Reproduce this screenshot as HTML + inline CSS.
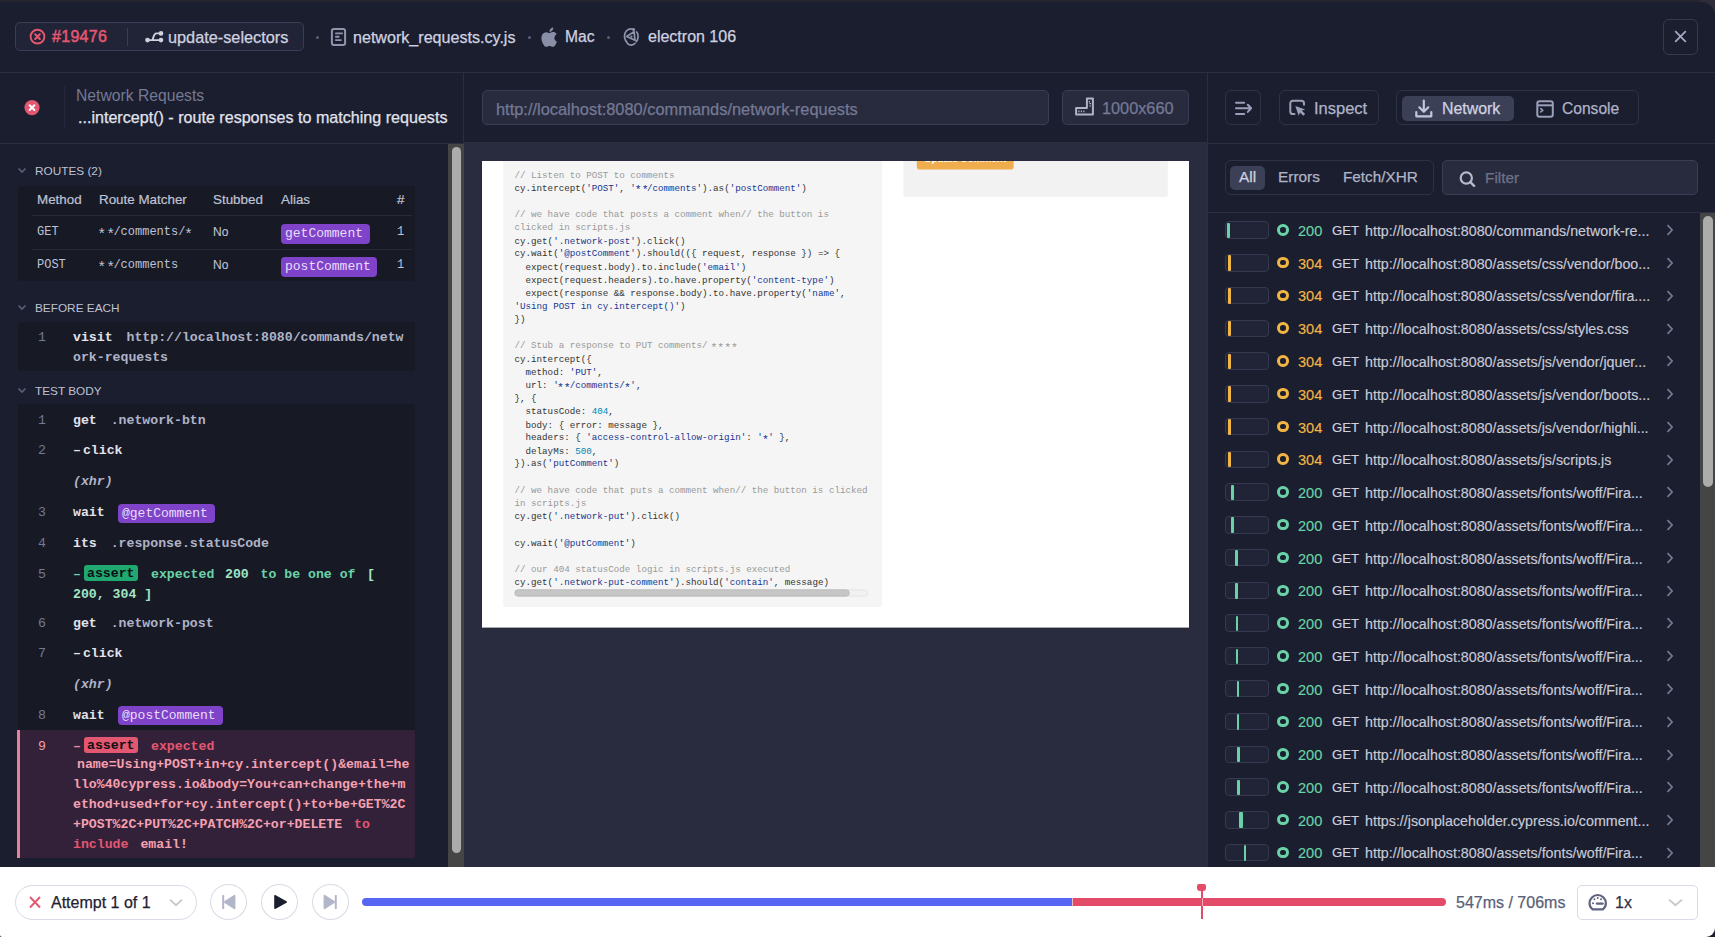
<!DOCTYPE html>
<html><head><meta charset="utf-8">
<style>
*{box-sizing:border-box;margin:0;padding:0}
html,body{width:1715px;height:937px;overflow:hidden;background:#1b1e2e;font-family:"Liberation Sans",sans-serif;color:#d0d2e0}
.abs{position:absolute}
.mono{font-family:"Liberation Mono",monospace}
svg{display:block}
/* header */
#hdr{left:0;top:0;width:1715px;height:73px;background:#1b1e2e;border-bottom:1px solid #2b2e42}
.pill{left:15px;top:22px;width:289px;height:29px;border:1px solid #3a3e55;background:#212437;border-radius:5px}
.htxt{font-size:16px;line-height:20px;white-space:nowrap;-webkit-text-stroke:0.25px currentColor}
.dot{width:3px;height:3px;border-radius:50%;background:#5a5f7a}
/* left */
#left{left:0;top:73px;width:464px;height:794px;background:#1b1e2e;border-right:1px solid #2b2e42}
#mid{left:464px;top:73px;width:743px;height:794px;background:#292c3f}
#right{left:1207px;top:73px;width:508px;height:794px;background:#1b1e2e;border-left:1px solid #2b2e42}
#bottom{left:0;top:867px;width:1715px;height:70px;background:#fff;border-radius:0 0 9px 2px}

.sec{font-size:11.8px;line-height:15px;color:#bfc2d4;white-space:nowrap}
.th{font-size:13.4px;line-height:16px;color:#bfc2d4;white-space:nowrap;-webkit-text-stroke:0.2px currentColor}
.td{font-size:12px;line-height:16px;color:#bfc2d4;white-space:nowrap;-webkit-text-stroke:0.1px currentColor}
.tdm{font-family:"Liberation Mono",monospace;font-size:12px;line-height:16px;color:#bfc2d4;white-space:nowrap}
.badge{font-family:"Liberation Mono",monospace;font-size:13px;line-height:20px;height:20px;background:#7f43c9;color:#e8defa;border-radius:4px;padding-left:4px;white-space:nowrap}
.b2{height:19px;line-height:19px}
.ln{left:38px;font-family:"Liberation Mono",monospace;font-size:13.2px;line-height:20px;color:#747994}
.cmd{left:73px;font-family:"Liberation Mono",monospace;font-size:13.2px;line-height:20px;color:#e1e3ed;white-space:pre}
.cmd b{font-weight:700;color:#e1e3ed}
.arg{color:#afb3c7;font-weight:700;margin-left:6px}
.xhr{font-style:italic;color:#afb3c7;font-weight:700}
.abadge{font-family:"Liberation Mono",monospace;font-size:13.2px;font-weight:700;line-height:17px;height:16px;width:54px;padding-left:3px;color:#0e0f15;border-radius:3px}
.grn{color:#69d3a7;font-weight:700}.grn b{color:#a3e6c6}
.red,.cmd .red{color:#e45770;font-weight:700}
.pink{color:#f5a0b0;font-weight:700}

.cl{position:absolute;left:0;font-family:"Liberation Mono",monospace;font-size:13px;line-height:18.58px;white-space:pre;color:#333}
.cl.c{color:#999}
.cl .s{color:#183691}
.cl .n{color:#0086b3}

.btn{border:1px solid #2e3247;border-radius:6px}
.wf{left:1225px;width:44px;height:17.5px;border:1px solid #363a50;background:#212436;border-radius:4px}
.ring{left:1277.3px;width:11.5px;height:11.5px;border:3.2px solid;border-radius:50%}
.nt{font-size:14.6px;line-height:18px;white-space:nowrap;-webkit-text-stroke:0.15px currentColor}
.st{left:1298px}
.gt{left:1332px;font-size:13.2px;color:#d0d2e0;letter-spacing:0}
.ur{left:1365px;font-size:14.25px;color:#c8cad8}
.circ{top:884px;width:37px;height:36px;border:1px solid #d8dae6;border-radius:50%}
.ast{font-style:normal;display:inline-block;transform:translateY(0.25em) scale(1.25)}
</style></head>
<body>
<div id="hdr" class="abs">
  <div class="abs" style="left:0;top:0;width:1715px;height:1.5px;background:#25252f"></div>
  <div class="abs" style="left:1699px;top:0;width:16px;height:16px;background:#2c2d38"><div style="width:16px;height:16px;background:#1b1e2e;border-top-right-radius:14px;margin-top:1.5px"></div></div>
  <div class="abs pill"></div>
  <svg class="abs" style="left:29px;top:28px" width="17" height="17" viewBox="0 0 17 17"><circle cx="8.5" cy="8.6" r="6.9" fill="none" stroke="#e45770" stroke-width="1.9"/><path d="M6.2 6.3l4.6 4.6M10.8 6.3l-4.6 4.6" stroke="#e45770" stroke-width="2.1" stroke-linecap="round"/></svg>
  <div class="abs htxt" style="left:52px;top:27px;color:#e45770;font-size:16px;letter-spacing:0.3px;-webkit-text-stroke:0.5px currentColor">#19476</div>
  <div class="abs" style="left:127px;top:28px;width:1px;height:18px;background:#3a3e55"></div>
  <svg class="abs" style="left:144px;top:30px" width="20" height="14" viewBox="0 0 20 14"><path d="M3.5 10.1H17M8.5 10.1C10 4 11 3.4 13 3.4H17" fill="none" stroke="#d0d2e0" stroke-width="1.9" stroke-linecap="round"/><circle cx="3.5" cy="10.1" r="2.3" fill="#d0d2e0"/><circle cx="17" cy="3.4" r="2.3" fill="#d0d2e0"/><circle cx="17" cy="10.1" r="2.3" fill="#d0d2e0"/></svg>
  <div class="abs htxt" style="left:168px;top:27px;font-size:16.3px">update-selectors</div>
  <div class="abs dot" style="left:315.5px;top:35.5px"></div>
  <svg class="abs" style="left:330px;top:27px" width="17" height="20" viewBox="0 0 17 20"><rect x="1.9" y="1.9" width="13.2" height="16" rx="2" fill="none" stroke="#9095ad" stroke-width="2"/><path d="M5.2 6.4h7.6M5.2 9.7h4.2M5.2 13.1h6.4" stroke="#9095ad" stroke-width="1.9"/></svg>
  <div class="abs htxt" style="left:353px;top:27px;font-size:16.1px">network_requests.cy.js</div>
  <div class="abs dot" style="left:527.5px;top:35.5px"></div>
  <svg class="abs" style="left:541px;top:27px" width="17" height="20" viewBox="0 0 17 20"><path fill="#8a8fa8" d="M13.6 10.6c0-2.4 2-3.5 2.1-3.6-1.1-1.7-2.9-1.9-3.5-1.9-1.5-.2-2.9.9-3.7.9-.8 0-1.9-.9-3.2-.8C3.6 5.2 2 6.2 1.2 7.7c-1.7 3-.4 7.3 1.2 9.7.8 1.2 1.8 2.5 3 2.4 1.2 0 1.700-.8 3.100-.8 1.5 0 1.9.8 3.2.8 1.300 0 2.100-1.200 2.900-2.400.9-1.300 1.300-2.600 1.300-2.700 0 0-2.600-1-2.600-3.900zM11.3 3.5c.7-.8 1.100-1.900 1-3-1 0-2.100.6-2.800 1.400-.6.700-1.200 1.800-1 2.900 1 .1 2.100-.5 2.800-1.300z"/></svg>
  <div class="abs htxt" style="left:565px;top:27px;font-size:15.6px">Mac</div>
  <div class="abs dot" style="left:606.5px;top:35.5px"></div>
  <svg class="abs" style="left:622px;top:27px" width="19" height="20" viewBox="0 0 19 20"><g fill="none" stroke="#9095ad" stroke-width="1.7" stroke-linecap="round">
<path d="M10.8 2.3C8 1.2 4.2 2.6 3 6.300 2 9.600 2.800 13.200 5.100 15.600"/>
<path d="M5.600 16.600C7.700 18.600 11.100 18.700 13.100 16.300"/>
<path d="M14.300 14.600C16.500 12 16.800 7.600 14.700 4.900"/>
<path d="M4.600 9.500L12.100 4.600 13 13.300z" stroke-linejoin="round"/>
</g><circle cx="11.600" cy="2.600" r="1.500" fill="#9095ad"/><circle cx="9.400" cy="9.700" r="1.100" fill="#9095ad"/></svg>
  <div class="abs htxt" style="left:648px;top:27px;font-size:16px">electron 106</div>
  <div class="abs" style="left:1663px;top:19px;width:35px;height:36px;border:1px solid #363a50;border-radius:6px"></div>
  <svg class="abs" style="left:1673px;top:29px" width="15" height="15" viewBox="0 0 15 15"><path d="M2.2 2.2l10.6 10.6M12.8 2.2L2.2 12.8" stroke="#a3a7bf" stroke-width="1.8"/></svg>
</div>
<div id="left" class="abs"></div>
<!-- left header -->
<svg class="abs" style="left:24px;top:100px" width="16" height="16" viewBox="0 0 16 16"><circle cx="8" cy="7.6" r="7.6" fill="#e45770"/><path d="M5.6 5.2l4.8 4.8M10.4 5.2l-4.8 4.8" stroke="#fff" stroke-width="2" stroke-linecap="round"/></svg>
<div class="abs" style="left:64px;top:86px;width:1px;height:42px;background:#25283a"></div>
<div class="abs htxt" style="left:76px;top:86px;font-size:15.7px;color:#747994;-webkit-text-stroke:0">Network Requests</div>
<div class="abs htxt" style="left:78px;top:107px;font-size:16.1px;color:#e1e3ed">...intercept() - route responses to matching requests</div>
<div class="abs" style="left:0;top:143px;width:464px;height:1px;background:#2b2e42"></div>
<!-- scrollbar -->
<div class="abs" style="left:448px;top:144px;width:16px;height:723px;background:#454545"></div>
<div class="abs" style="left:451.5px;top:147px;width:9px;height:706px;background:#acacac;border-radius:4.5px"></div>
<!-- routes -->
<svg class="abs chev" style="left:17px;top:167px" width="10" height="7" viewBox="0 0 10 7"><path d="M1.5 1.5l3.5 3.5 3.5-3.5" fill="none" stroke="#5a5f7a" stroke-width="1.6"/></svg>
<div class="abs sec" style="left:35px;top:164px">ROUTES (2)</div>
<div class="abs" style="left:18px;top:186px;width:397px;height:95px;background:#171925"></div>
<div class="abs th" style="left:37px;top:192px">Method</div>
<div class="abs th" style="left:99px;top:192px">Route Matcher</div>
<div class="abs th" style="left:213px;top:192px">Stubbed</div>
<div class="abs th" style="left:281px;top:192px">Alias</div>
<div class="abs th" style="left:397px;top:192px">#</div>
<div class="abs" style="left:32px;top:215px;width:380px;height:1px;background:#262939"></div>
<div class="abs tdm" style="left:37px;top:224px">GET</div>
<div class="abs tdm" style="left:99px;top:224px"><i class="ast">**</i>/comments/<i class="ast">*</i></div>
<div class="abs td" style="left:213px;top:223.5px">No</div>
<div class="abs badge" style="left:281px;top:224px;width:89px">getComment</div>
<div class="abs tdm" style="left:397px;top:224px">1</div>
<div class="abs" style="left:32px;top:249px;width:380px;height:1px;background:#262939"></div>
<div class="abs tdm" style="left:37px;top:257px">POST</div>
<div class="abs tdm" style="left:99px;top:257px"><i class="ast">**</i>/comments</div>
<div class="abs td" style="left:213px;top:256.5px">No</div>
<div class="abs badge" style="left:281px;top:257px;width:96px">postComment</div>
<div class="abs tdm" style="left:397px;top:257px">1</div>
<!-- before each -->
<svg class="abs chev" style="left:17px;top:304px" width="10" height="7" viewBox="0 0 10 7"><path d="M1.5 1.5l3.5 3.5 3.5-3.5" fill="none" stroke="#5a5f7a" stroke-width="1.6"/></svg>
<div class="abs sec" style="left:35px;top:301px">BEFORE EACH</div>
<div class="abs" style="left:18px;top:322px;width:397px;height:49px;background:#171925"></div>
<div class="abs ln" style="top:328px">1</div>
<div class="abs cmd" style="top:328px"><b>visit</b>&nbsp;<span class="arg">http://localhost:8080/commands/netw</span></div>
<div class="abs cmd" style="top:348px"><span class="arg" style="margin-left:0">ork-requests</span></div>
<!-- test body -->
<svg class="abs chev" style="left:17px;top:387px" width="10" height="7" viewBox="0 0 10 7"><path d="M1.5 1.5l3.5 3.5 3.5-3.5" fill="none" stroke="#5a5f7a" stroke-width="1.6"/></svg>
<div class="abs sec" style="left:35px;top:384px">TEST BODY</div>
<div class="abs" style="left:18px;top:404px;width:397px;height:454px;background:#171925"></div>
<div class="abs ln" style="top:411px">1</div>
<div class="abs cmd" style="top:411px"><b>get</b>&nbsp;<span class="arg">.network-btn</span></div>
<div class="abs ln" style="top:441px">2</div>
<div class="abs cmd" style="top:441px"><b>–</b><b style="margin-left:2px">click</b></div>
<div class="abs cmd xhr" style="top:472px">(xhr)</div>
<div class="abs ln" style="top:503px">3</div>
<div class="abs cmd" style="top:503px"><b>wait</b></div>
<div class="abs badge b2" style="left:118px;top:504px;width:97px">@getComment</div>
<div class="abs ln" style="top:534px">4</div>
<div class="abs cmd" style="top:534px"><b>its</b>&nbsp;<span class="arg">.response.statusCode</span></div>
<div class="abs ln" style="top:565px">5</div>
<div class="abs cmd" style="top:565px"><b style="color:#69d3a7">–</b></div>
<div class="abs abadge" style="left:84px;top:565px;background:#1fa971">assert</div>
<div class="abs cmd grn" style="left:151px;top:565px">expected</div><div class="abs cmd grn" style="left:225px;top:565px"><b>200</b></div><div class="abs cmd grn" style="left:260.5px;top:565px">to be one of</div><div class="abs cmd grn" style="left:367px;top:565px"><b>[</b></div>
<div class="abs cmd grn" style="top:585px"><b class="gv">200, 304 ]</b></div>
<div class="abs ln" style="top:614px">6</div>
<div class="abs cmd" style="top:614px"><b>get</b>&nbsp;<span class="arg">.network-post</span></div>
<div class="abs ln" style="top:644px">7</div>
<div class="abs cmd" style="top:644px"><b>–</b><b style="margin-left:2px">click</b></div>
<div class="abs cmd xhr" style="top:675px">(xhr)</div>
<div class="abs ln" style="top:706px">8</div>
<div class="abs cmd" style="top:706px"><b>wait</b></div>
<div class="abs badge b2" style="left:118px;top:706px;width:105px">@postComment</div>
<!-- error row -->
<div class="abs" style="left:17px;top:730px;width:398px;height:128px;background:#33213a;border-left:3px solid #ea7f96"></div>
<div class="abs ln" style="top:737px;color:#f5a0b0">9</div>
<div class="abs cmd" style="top:737px"><b style="color:#f08ba0">–</b></div>
<div class="abs abadge" style="left:84px;top:737px;background:#e45770">assert</div>
<div class="abs cmd red" style="left:151px;top:737px">expected</div>
<div class="abs cmd pink" style="top:755px;left:77px">name=Using+POST+in+cy.intercept()&amp;email=he</div>
<div class="abs cmd pink" style="top:775px">llo%40cypress.io&amp;body=You+can+change+the+m</div>
<div class="abs cmd pink" style="top:795px">ethod+used+for+cy.intercept()+to+be+GET%2C</div>
<div class="abs cmd pink" style="top:815px">+POST%2C+PUT%2C+PATCH%2C+or+DELETE<span class="red" style="margin-left:12px">to</span></div>
<div class="abs cmd pink" style="top:834.5px"><span class="red">include</span><span style="margin-left:12px">email!</span></div>

<div id="mid" class="abs"></div>
<div class="abs" style="left:464px;top:73px;width:743px;height:70px;background:#1b1e2e;border-bottom:1px solid #2b2e42"></div>
<div class="abs" style="left:482px;top:90px;width:567px;height:35px;background:#282b3e;border:1px solid #3a3e55;border-radius:5px"></div>
<div class="abs htxt" style="left:496px;top:99px;font-size:16.4px;color:#747994">http://localhost:8080/commands/network-requests</div>
<div class="abs" style="left:1062px;top:90px;width:127px;height:35px;background:#282b3e;border:1px solid #3a3e55;border-radius:5px"></div>
<svg class="abs" style="left:1075px;top:96px" width="20" height="21" viewBox="0 0 20 21"><path d="M11.9 2.4h6v16.200h-16.800v-6.600h10.800z" fill="none" stroke="#afb3c7" stroke-width="2" stroke-linejoin="round"/><path d="M3.9 14.6v1.6M6.4 14.6v1.6M8.9 14.6v1.6M14.4 5v1.6M14.4 7.6h1.600M14.400 10h1.600" stroke="#afb3c7" stroke-width="1.2"/></svg>
<div class="abs htxt" style="left:1102px;top:98px;font-size:16.3px;color:#747994">1000x660</div>
<div id="vp" class="abs" style="left:482px;top:161px;width:1000px;height:660px;background:#fff;transform:scale(0.707);transform-origin:0 0;overflow:hidden;box-shadow:0 1px 2px rgba(0,0,0,.4)">
  <div class="abs" style="left:596px;top:-60px;width:374px;height:111px;background:#f2f2f2;border-radius:4px"></div>
  <div class="abs" style="left:615px;top:-20px;width:137px;height:32px;background:#f0ad4e;border-radius:4px;color:#fff;font-size:14px;line-height:34px;text-align:center;font-family:'Liberation Sans',sans-serif;font-weight:700">Update Comment</div>
  <div class="abs" style="left:30px;top:-40px;width:536px;height:671px;background:#f5f5f5;border-radius:4px"></div>
  <div class="abs" style="left:46px;top:0;width:510px;height:660px">
<div class="cl c" style="top:11.70px">// Listen to POST to comments</div>
<div class="cl" style="top:30.28px">cy.intercept(<span class="s">'POST'</span>, <span class="s">'<i class="ast">**</i>/comments'</span>).as(<span class="s">'postComment'</span>)</div>
<div class="cl" style="top:48.86px"></div>
<div class="cl c" style="top:67.44px">// we have code that posts a comment when// the button is</div>
<div class="cl c" style="top:86.02px">clicked in scripts.js</div>
<div class="cl" style="top:104.60px">cy.get(<span class="s">'.network-post'</span>).click()</div>
<div class="cl" style="top:123.18px">cy.wait(<span class="s">'@postComment'</span>).should(({ request, response }) =&gt; {</div>
<div class="cl" style="top:141.76px">  expect(request.body).to.include(<span class="s">'email'</span>)</div>
<div class="cl" style="top:160.34px">  expect(request.headers).to.have.property(<span class="s">'content-type'</span>)</div>
<div class="cl" style="top:178.92px">  expect(response &amp;&amp; response.body).to.have.property(<span class="s">'name'</span>,</div>
<div class="cl" style="top:197.50px"><span class="s">'Using POST in cy.intercept()'</span>)</div>
<div class="cl" style="top:216.08px">})</div>
<div class="cl" style="top:234.66px"></div>
<div class="cl c" style="top:253.24px">// Stub a response to PUT comments/ <i class="ast">****</i></div>
<div class="cl" style="top:271.82px">cy.intercept({</div>
<div class="cl" style="top:290.40px">  method: <span class="s">'PUT'</span>,</div>
<div class="cl" style="top:308.98px">  url: <span class="s">'<i class="ast">**</i>/comments/<i class="ast">*</i>'</span>,</div>
<div class="cl" style="top:327.56px">}, {</div>
<div class="cl" style="top:346.14px">  statusCode: <span class="n">404</span>,</div>
<div class="cl" style="top:364.72px">  body: { error: message },</div>
<div class="cl" style="top:383.30px">  headers: { <span class="s">'access-control-allow-origin'</span>: <span class="s">'<i class="ast">*</i>'</span> },</div>
<div class="cl" style="top:401.88px">  delayMs: <span class="n">500</span>,</div>
<div class="cl" style="top:420.46px">}).as(<span class="s">'putComment'</span>)</div>
<div class="cl" style="top:439.04px"></div>
<div class="cl c" style="top:457.62px">// we have code that puts a comment when// the button is clicked</div>
<div class="cl c" style="top:476.20px">in scripts.js</div>
<div class="cl" style="top:494.78px">cy.get(<span class="s">'.network-put'</span>).click()</div>
<div class="cl" style="top:513.36px"></div>
<div class="cl" style="top:531.94px">cy.wait(<span class="s">'@putComment'</span>)</div>
<div class="cl" style="top:550.52px"></div>
<div class="cl c" style="top:569.10px">// our 404 statusCode logic in scripts.js executed</div>
<div class="cl" style="top:587.68px">cy.get(<span class="s">'.network-put-comment'</span>).should(<span class="s">'contain'</span>, message)</div>
  </div>
  <div class="abs" style="left:46px;top:606px;width:500px;height:10px;background:#f1f1f1;border:1px solid #e0e0e0;border-radius:5px"></div>
  <div class="abs" style="left:46px;top:606px;width:474px;height:10px;background:#c6c6c6;border:1px solid #b5b5b5;border-radius:5px"></div>
</div>

<div id="right" class="abs"></div>
<div class="abs" style="left:1207px;top:143px;width:508px;height:1px;background:#2b2e42"></div>
<div class="abs btn" style="left:1225px;top:90px;width:36px;height:35px"></div>
<svg class="abs" style="left:1234px;top:100px" width="20" height="16" viewBox="0 0 20 16"><path d="M2 2.8h8.200M2 8.300h14.800M2 13.900h8.200M13.800 4.700l3.300 3.600-3.300 3.600" fill="none" stroke="#9aa0b8" stroke-width="2" stroke-linecap="round" stroke-linejoin="round"/></svg>
<div class="abs btn" style="left:1279px;top:90px;width:100px;height:35px"></div>
<svg class="abs" style="left:1288px;top:99px" width="19" height="18" viewBox="0 0 19 18"><path d="M6.500 15.100H5C3.300 15.100 2.300 14.100 2.300 12.400V4.500C2.300 2.800 3.300 1.800 5 1.800H13.300C15 1.800 16 2.800 16 4.500V5.800" fill="none" stroke="#9aa0b8" stroke-width="2" stroke-linecap="round"/><path d="M7.300 6.900L17.200 10.400 13.800 11.600 17.100 15 15.300 16.700 12 13.400 10.700 16.800z" fill="#9aa0b8"/></svg>
<div class="abs htxt" style="left:1314px;top:98px;font-size:16.5px;color:#afb3c7">Inspect</div>
<div class="abs btn" style="left:1396px;top:90px;width:243px;height:35px"></div>
<div class="abs" style="left:1402px;top:96px;width:112px;height:25px;background:#3c4057;border-radius:5px"></div>
<svg class="abs" style="left:1414px;top:99px" width="20" height="20" viewBox="0 0 20 20"><path d="M9.800 1.600v11M5.300 8.300l4.500 4.500 4.500-4.500M2.300 13v4.300h15V13" fill="none" stroke="#c3c6d8" stroke-width="2.2" stroke-linecap="round" stroke-linejoin="round"/></svg>
<div class="abs htxt" style="left:1442px;top:99px;font-size:15.9px;color:#d0d2e0">Network</div>
<svg class="abs" style="left:1535px;top:99px" width="20" height="20" viewBox="0 0 20 20"><rect x="2.300" y="2.300" width="15.500" height="15.500" rx="2.300" fill="none" stroke="#9aa0b8" stroke-width="2"/><path d="M2.300 6.300h15.500" stroke="#9aa0b8" stroke-width="2"/><path d="M5.800 9.700l2 1.600-2 1.600" fill="none" stroke="#9aa0b8" stroke-width="1.600" stroke-linecap="round" stroke-linejoin="round"/></svg>
<div class="abs htxt" style="left:1562px;top:99px;font-size:15.6px;color:#afb3c7">Console</div>
<div class="abs btn" style="left:1225px;top:160px;width:209px;height:35px"></div>
<div class="abs" style="left:1230px;top:166px;width:35px;height:24px;background:#3c4057;border-radius:5px"></div>
<div class="abs htxt" style="left:1239px;top:167px;font-size:15.4px;color:#d0d2e0">All</div>
<div class="abs htxt" style="left:1278px;top:167px;font-size:15.4px;color:#afb3c7">Errors</div>
<div class="abs htxt" style="left:1343px;top:167px;font-size:15.3px;color:#afb3c7">Fetch/XHR</div>
<div class="abs" style="left:1442px;top:160px;width:256px;height:35px;background:#282b3e;border:1px solid #3a3e55;border-radius:5px"></div>
<svg class="abs" style="left:1458px;top:170px" width="19" height="18" viewBox="0 0 19 18"><circle cx="8.300" cy="8" r="5.600" fill="none" stroke="#b5b9cc" stroke-width="2.200"/><path d="M12.400 12.100l3.700 3.700" stroke="#b5b9cc" stroke-width="2.400" stroke-linecap="round"/></svg>
<div class="abs htxt" style="left:1485px;top:168px;font-size:15.4px;color:#6e7288">Filter</div>
<div class="abs" style="left:1207px;top:212px;width:508px;height:1px;background:#2b2e42"></div>
<div class="abs" style="left:1700px;top:213px;width:15px;height:654px;background:#454545"></div>
<div class="abs" style="left:1703px;top:216px;width:9.5px;height:271px;background:#acacac;border-radius:5px"></div>
<div class="abs wf" style="top:221.3px"></div><div class="abs" style="left:1227.3px;top:222.6px;width:2.7px;height:15.6px;background:#69d3a7;border-radius:1px"></div><div class="abs ring" style="top:224.1px;border-color:#69d3a7"></div><div class="abs nt st" style="top:221.9px;color:#69d3a7">200</div><div class="abs nt gt" style="top:221.9px">GET</div><div class="abs nt ur" style="top:221.9px">http://localhost:8080/commands/network-re...</div><svg class="abs" style="left:1665px;top:224.3px" width="10" height="12" viewBox="0 0 10 12"><path d="M2.5 1.2l4.6 4.8-4.600 4.800" fill="none" stroke="#747994" stroke-width="1.7"/></svg>
<div class="abs wf" style="top:254.1px"></div><div class="abs" style="left:1228.2px;top:255.4px;width:3px;height:15.6px;background:#f1b543;border-radius:1px"></div><div class="abs ring" style="top:256.9px;border-color:#f1b543"></div><div class="abs nt st" style="top:254.7px;color:#f1b543">304</div><div class="abs nt gt" style="top:254.7px">GET</div><div class="abs nt ur" style="top:254.7px">http://localhost:8080/assets/css/vendor/boo...</div><svg class="abs" style="left:1665px;top:257.1px" width="10" height="12" viewBox="0 0 10 12"><path d="M2.5 1.2l4.6 4.8-4.600 4.800" fill="none" stroke="#747994" stroke-width="1.7"/></svg>
<div class="abs wf" style="top:286.8px"></div><div class="abs" style="left:1228.2px;top:288.1px;width:3px;height:15.6px;background:#f1b543;border-radius:1px"></div><div class="abs ring" style="top:289.6px;border-color:#f1b543"></div><div class="abs nt st" style="top:287.4px;color:#f1b543">304</div><div class="abs nt gt" style="top:287.4px">GET</div><div class="abs nt ur" style="top:287.4px">http://localhost:8080/assets/css/vendor/fira....</div><svg class="abs" style="left:1665px;top:289.8px" width="10" height="12" viewBox="0 0 10 12"><path d="M2.5 1.2l4.6 4.8-4.600 4.800" fill="none" stroke="#747994" stroke-width="1.7"/></svg>
<div class="abs wf" style="top:319.6px"></div><div class="abs" style="left:1228.2px;top:320.9px;width:3px;height:15.6px;background:#f1b543;border-radius:1px"></div><div class="abs ring" style="top:322.4px;border-color:#f1b543"></div><div class="abs nt st" style="top:320.2px;color:#f1b543">304</div><div class="abs nt gt" style="top:320.2px">GET</div><div class="abs nt ur" style="top:320.2px">http://localhost:8080/assets/css/styles.css</div><svg class="abs" style="left:1665px;top:322.6px" width="10" height="12" viewBox="0 0 10 12"><path d="M2.5 1.2l4.6 4.8-4.600 4.800" fill="none" stroke="#747994" stroke-width="1.7"/></svg>
<div class="abs wf" style="top:352.3px"></div><div class="abs" style="left:1228.2px;top:353.6px;width:3px;height:15.6px;background:#f1b543;border-radius:1px"></div><div class="abs ring" style="top:355.1px;border-color:#f1b543"></div><div class="abs nt st" style="top:352.9px;color:#f1b543">304</div><div class="abs nt gt" style="top:352.9px">GET</div><div class="abs nt ur" style="top:352.9px">http://localhost:8080/assets/js/vendor/jquer...</div><svg class="abs" style="left:1665px;top:355.3px" width="10" height="12" viewBox="0 0 10 12"><path d="M2.5 1.2l4.6 4.8-4.600 4.800" fill="none" stroke="#747994" stroke-width="1.7"/></svg>
<div class="abs wf" style="top:385.1px"></div><div class="abs" style="left:1228.2px;top:386.4px;width:3px;height:15.6px;background:#f1b543;border-radius:1px"></div><div class="abs ring" style="top:387.9px;border-color:#f1b543"></div><div class="abs nt st" style="top:385.7px;color:#f1b543">304</div><div class="abs nt gt" style="top:385.7px">GET</div><div class="abs nt ur" style="top:385.7px">http://localhost:8080/assets/js/vendor/boots...</div><svg class="abs" style="left:1665px;top:388.1px" width="10" height="12" viewBox="0 0 10 12"><path d="M2.5 1.2l4.6 4.8-4.600 4.800" fill="none" stroke="#747994" stroke-width="1.7"/></svg>
<div class="abs wf" style="top:417.9px"></div><div class="abs" style="left:1228.2px;top:419.2px;width:3px;height:15.6px;background:#f1b543;border-radius:1px"></div><div class="abs ring" style="top:420.7px;border-color:#f1b543"></div><div class="abs nt st" style="top:418.5px;color:#f1b543">304</div><div class="abs nt gt" style="top:418.5px">GET</div><div class="abs nt ur" style="top:418.5px">http://localhost:8080/assets/js/vendor/highli...</div><svg class="abs" style="left:1665px;top:420.9px" width="10" height="12" viewBox="0 0 10 12"><path d="M2.5 1.2l4.6 4.8-4.600 4.800" fill="none" stroke="#747994" stroke-width="1.7"/></svg>
<div class="abs wf" style="top:450.6px"></div><div class="abs" style="left:1228.2px;top:451.9px;width:3px;height:15.6px;background:#f1b543;border-radius:1px"></div><div class="abs ring" style="top:453.4px;border-color:#f1b543"></div><div class="abs nt st" style="top:451.2px;color:#f1b543">304</div><div class="abs nt gt" style="top:451.2px">GET</div><div class="abs nt ur" style="top:451.2px">http://localhost:8080/assets/js/scripts.js</div><svg class="abs" style="left:1665px;top:453.6px" width="10" height="12" viewBox="0 0 10 12"><path d="M2.5 1.2l4.6 4.8-4.600 4.800" fill="none" stroke="#747994" stroke-width="1.7"/></svg>
<div class="abs wf" style="top:483.4px"></div><div class="abs" style="left:1231.0px;top:484.7px;width:2.6px;height:15.6px;background:#69d3a7;border-radius:1px"></div><div class="abs ring" style="top:486.2px;border-color:#69d3a7"></div><div class="abs nt st" style="top:484.0px;color:#69d3a7">200</div><div class="abs nt gt" style="top:484.0px">GET</div><div class="abs nt ur" style="top:484.0px">http://localhost:8080/assets/fonts/woff/Fira...</div><svg class="abs" style="left:1665px;top:486.4px" width="10" height="12" viewBox="0 0 10 12"><path d="M2.5 1.2l4.6 4.8-4.600 4.800" fill="none" stroke="#747994" stroke-width="1.7"/></svg>
<div class="abs wf" style="top:516.1px"></div><div class="abs" style="left:1231.0px;top:517.4px;width:2.6px;height:15.6px;background:#69d3a7;border-radius:1px"></div><div class="abs ring" style="top:518.9px;border-color:#69d3a7"></div><div class="abs nt st" style="top:516.7px;color:#69d3a7">200</div><div class="abs nt gt" style="top:516.7px">GET</div><div class="abs nt ur" style="top:516.7px">http://localhost:8080/assets/fonts/woff/Fira...</div><svg class="abs" style="left:1665px;top:519.1px" width="10" height="12" viewBox="0 0 10 12"><path d="M2.5 1.2l4.6 4.8-4.600 4.800" fill="none" stroke="#747994" stroke-width="1.7"/></svg>
<div class="abs wf" style="top:548.9px"></div><div class="abs" style="left:1235.3px;top:550.2px;width:2.6px;height:15.6px;background:#69d3a7;border-radius:1px"></div><div class="abs ring" style="top:551.7px;border-color:#69d3a7"></div><div class="abs nt st" style="top:549.5px;color:#69d3a7">200</div><div class="abs nt gt" style="top:549.5px">GET</div><div class="abs nt ur" style="top:549.5px">http://localhost:8080/assets/fonts/woff/Fira...</div><svg class="abs" style="left:1665px;top:551.9px" width="10" height="12" viewBox="0 0 10 12"><path d="M2.5 1.2l4.6 4.8-4.600 4.800" fill="none" stroke="#747994" stroke-width="1.7"/></svg>
<div class="abs wf" style="top:581.7px"></div><div class="abs" style="left:1235.3px;top:583.0px;width:2.6px;height:15.6px;background:#69d3a7;border-radius:1px"></div><div class="abs ring" style="top:584.5px;border-color:#69d3a7"></div><div class="abs nt st" style="top:582.3px;color:#69d3a7">200</div><div class="abs nt gt" style="top:582.3px">GET</div><div class="abs nt ur" style="top:582.3px">http://localhost:8080/assets/fonts/woff/Fira...</div><svg class="abs" style="left:1665px;top:584.7px" width="10" height="12" viewBox="0 0 10 12"><path d="M2.5 1.2l4.6 4.8-4.600 4.800" fill="none" stroke="#747994" stroke-width="1.7"/></svg>
<div class="abs wf" style="top:614.4px"></div><div class="abs" style="left:1235.6px;top:615.7px;width:2.6px;height:15.6px;background:#69d3a7;border-radius:1px"></div><div class="abs ring" style="top:617.2px;border-color:#69d3a7"></div><div class="abs nt st" style="top:615.0px;color:#69d3a7">200</div><div class="abs nt gt" style="top:615.0px">GET</div><div class="abs nt ur" style="top:615.0px">http://localhost:8080/assets/fonts/woff/Fira...</div><svg class="abs" style="left:1665px;top:617.4px" width="10" height="12" viewBox="0 0 10 12"><path d="M2.5 1.2l4.6 4.8-4.600 4.800" fill="none" stroke="#747994" stroke-width="1.7"/></svg>
<div class="abs wf" style="top:647.2px"></div><div class="abs" style="left:1235.6px;top:648.5px;width:2.6px;height:15.6px;background:#69d3a7;border-radius:1px"></div><div class="abs ring" style="top:650.0px;border-color:#69d3a7"></div><div class="abs nt st" style="top:647.8px;color:#69d3a7">200</div><div class="abs nt gt" style="top:647.8px">GET</div><div class="abs nt ur" style="top:647.8px">http://localhost:8080/assets/fonts/woff/Fira...</div><svg class="abs" style="left:1665px;top:650.2px" width="10" height="12" viewBox="0 0 10 12"><path d="M2.5 1.2l4.6 4.8-4.600 4.800" fill="none" stroke="#747994" stroke-width="1.7"/></svg>
<div class="abs wf" style="top:679.9px"></div><div class="abs" style="left:1236.9px;top:681.2px;width:2.6px;height:15.6px;background:#69d3a7;border-radius:1px"></div><div class="abs ring" style="top:682.7px;border-color:#69d3a7"></div><div class="abs nt st" style="top:680.5px;color:#69d3a7">200</div><div class="abs nt gt" style="top:680.5px">GET</div><div class="abs nt ur" style="top:680.5px">http://localhost:8080/assets/fonts/woff/Fira...</div><svg class="abs" style="left:1665px;top:682.9px" width="10" height="12" viewBox="0 0 10 12"><path d="M2.5 1.2l4.6 4.8-4.600 4.800" fill="none" stroke="#747994" stroke-width="1.7"/></svg>
<div class="abs wf" style="top:712.7px"></div><div class="abs" style="left:1236.9px;top:714.0px;width:2.6px;height:15.6px;background:#69d3a7;border-radius:1px"></div><div class="abs ring" style="top:715.5px;border-color:#69d3a7"></div><div class="abs nt st" style="top:713.3px;color:#69d3a7">200</div><div class="abs nt gt" style="top:713.3px">GET</div><div class="abs nt ur" style="top:713.3px">http://localhost:8080/assets/fonts/woff/Fira...</div><svg class="abs" style="left:1665px;top:715.7px" width="10" height="12" viewBox="0 0 10 12"><path d="M2.5 1.2l4.6 4.8-4.600 4.800" fill="none" stroke="#747994" stroke-width="1.7"/></svg>
<div class="abs wf" style="top:745.5px"></div><div class="abs" style="left:1237.3px;top:746.8px;width:2.6px;height:15.6px;background:#69d3a7;border-radius:1px"></div><div class="abs ring" style="top:748.3px;border-color:#69d3a7"></div><div class="abs nt st" style="top:746.1px;color:#69d3a7">200</div><div class="abs nt gt" style="top:746.1px">GET</div><div class="abs nt ur" style="top:746.1px">http://localhost:8080/assets/fonts/woff/Fira...</div><svg class="abs" style="left:1665px;top:748.5px" width="10" height="12" viewBox="0 0 10 12"><path d="M2.5 1.2l4.6 4.8-4.600 4.800" fill="none" stroke="#747994" stroke-width="1.7"/></svg>
<div class="abs wf" style="top:778.2px"></div><div class="abs" style="left:1237.3px;top:779.5px;width:2.6px;height:15.6px;background:#69d3a7;border-radius:1px"></div><div class="abs ring" style="top:781.0px;border-color:#69d3a7"></div><div class="abs nt st" style="top:778.8px;color:#69d3a7">200</div><div class="abs nt gt" style="top:778.8px">GET</div><div class="abs nt ur" style="top:778.8px">http://localhost:8080/assets/fonts/woff/Fira...</div><svg class="abs" style="left:1665px;top:781.2px" width="10" height="12" viewBox="0 0 10 12"><path d="M2.5 1.2l4.6 4.8-4.600 4.800" fill="none" stroke="#747994" stroke-width="1.7"/></svg>
<div class="abs wf" style="top:811.0px"></div><div class="abs" style="left:1238.6px;top:812.3px;width:4.2px;height:15.6px;background:#69d3a7;border-radius:1px"></div><div class="abs ring" style="top:813.8px;border-color:#69d3a7"></div><div class="abs nt st" style="top:811.6px;color:#69d3a7">200</div><div class="abs nt gt" style="top:811.6px">GET</div><div class="abs nt ur" style="top:811.6px">https://jsonplaceholder.cypress.io/comment...</div><svg class="abs" style="left:1665px;top:814.0px" width="10" height="12" viewBox="0 0 10 12"><path d="M2.5 1.2l4.6 4.8-4.600 4.800" fill="none" stroke="#747994" stroke-width="1.7"/></svg>
<div class="abs wf" style="top:843.7px"></div><div class="abs" style="left:1243.7px;top:845.0px;width:2.6px;height:15.6px;background:#69d3a7;border-radius:1px"></div><div class="abs ring" style="top:846.5px;border-color:#69d3a7"></div><div class="abs nt st" style="top:844.3px;color:#69d3a7">200</div><div class="abs nt gt" style="top:844.3px">GET</div><div class="abs nt ur" style="top:844.3px">http://localhost:8080/assets/fonts/woff/Fira...</div><svg class="abs" style="left:1665px;top:846.7px" width="10" height="12" viewBox="0 0 10 12"><path d="M2.5 1.2l4.6 4.8-4.600 4.800" fill="none" stroke="#747994" stroke-width="1.7"/></svg>

<div id="bottom" class="abs"></div>
<div class="abs" style="left:15px;top:885px;width:182px;height:35px;border:1px solid #d8dae6;border-radius:18px"></div>
<svg class="abs" style="left:28px;top:896px" width="14" height="13" viewBox="0 0 14 13"><path d="M2 1l10 10.500M12 1L2 11.500" stroke="#e45770" stroke-width="1.900"/></svg>
<div class="abs htxt" style="left:51px;top:893px;font-size:16px;color:#1f2232">Attempt 1 of 1</div>
<svg class="abs" style="left:168px;top:898px" width="16" height="10" viewBox="0 0 16 10"><path d="M2 1.600l6 5.600 6-5.600" fill="none" stroke="#c8c9cf" stroke-width="1.900"/></svg>
<div class="abs circ" style="left:210px"></div>
<div class="abs circ" style="left:261px"></div>
<div class="abs circ" style="left:312px"></div>
<svg class="abs" style="left:221px;top:894px" width="16" height="16" viewBox="0 0 16 16"><rect x="1.2" y="0.9" width="2" height="14.2" rx=".6" fill="#b2b6ca"/><path d="M3.6 8.9a1 1 0 0 1 0-1.8L13 1.1c.8-.5 1.4-.2 1.4.7v12.4c0 .9-.6 1.2-1.4.7z" fill="#b2b6ca"/></svg>
<svg class="abs" style="left:272px;top:894px" width="17" height="16" viewBox="0 0 17 16"><path d="M2.200 2C2.200 1.200 3 .8 3.700 1.200L14.500 7.200c.7.400.7 1.200 0 1.600L3.700 14.800C3 15.200 2.200 14.800 2.200 14z" fill="#1b1e2e"/></svg>
<svg class="abs" style="left:322px;top:894px" width="16" height="16" viewBox="0 0 16 16"><rect x="12.8" y="0.9" width="2" height="14.2" rx=".6" fill="#b2b6ca"/><path d="M12.4 8.9a1 1 0 0 0 0-1.8L3 1.1c-.8-.5-1.4-.2-1.4.7v12.4c0 .9.6 1.2 1.4.7z" fill="#b2b6ca"/></svg>
<div class="abs" style="left:362px;top:898px;width:712px;height:8px;background:#5865f2;border-radius:4px 0 0 4px"></div>
<div class="abs" style="left:1073px;top:898px;width:373px;height:8px;background:#e34b69;border-radius:0 4px 4px 0"></div>
<div class="abs" style="left:1072px;top:898px;width:1px;height:8px;background:#f0b8c4"></div>
<div class="abs" style="left:1201px;top:889px;width:1.6px;height:30px;background:#e34b69"></div>
<div class="abs" style="left:1197px;top:884px;width:9px;height:7px;background:#e34b69;border-radius:2px 2px 3px 3px"></div>
<div class="abs" style="left:1202px;top:898px;width:1px;height:8px;background:#f3a9b8"></div>
<div class="abs htxt" style="left:1456px;top:893px;font-size:16px;color:#5a5f7a">547ms / 706ms</div>
<div class="abs" style="left:1577px;top:885px;width:121px;height:35px;border:1px solid #d8dae6;border-radius:5px"></div>
<svg class="abs" style="left:1588px;top:893px" width="20" height="18" viewBox="0 0 20 18"><path d="M4.600 16.300C2.600 15 1.500 12.900 1.500 10.300 1.500 5.700 5.200 2 9.700 2s8.200 3.700 8.200 8.300c0 2.600-1.100 4.700-3.100 6z" fill="none" stroke="#5e6380" stroke-width="2.200" stroke-linejoin="round"/><circle cx="5" cy="10.200" r="1" fill="#5e6380"/><circle cx="6.400" cy="6.300" r="1" fill="#5e6380"/><circle cx="9.700" cy="4.900" r="1" fill="#5e6380"/><circle cx="13" cy="6.300" r="1" fill="#5e6380"/><path d="M8.800 10.600h6" stroke="#5e6380" stroke-width="2.200" stroke-linecap="round"/></svg>
<div class="abs htxt" style="left:1615px;top:893px;font-size:16px;color:#2e3247">1x</div>
<svg class="abs" style="left:1667px;top:898px" width="17" height="10" viewBox="0 0 17 10"><path d="M2 1.600l6.500 5.600 6.500-5.600" fill="none" stroke="#c8c9cf" stroke-width="1.900"/></svg>

</body></html>
